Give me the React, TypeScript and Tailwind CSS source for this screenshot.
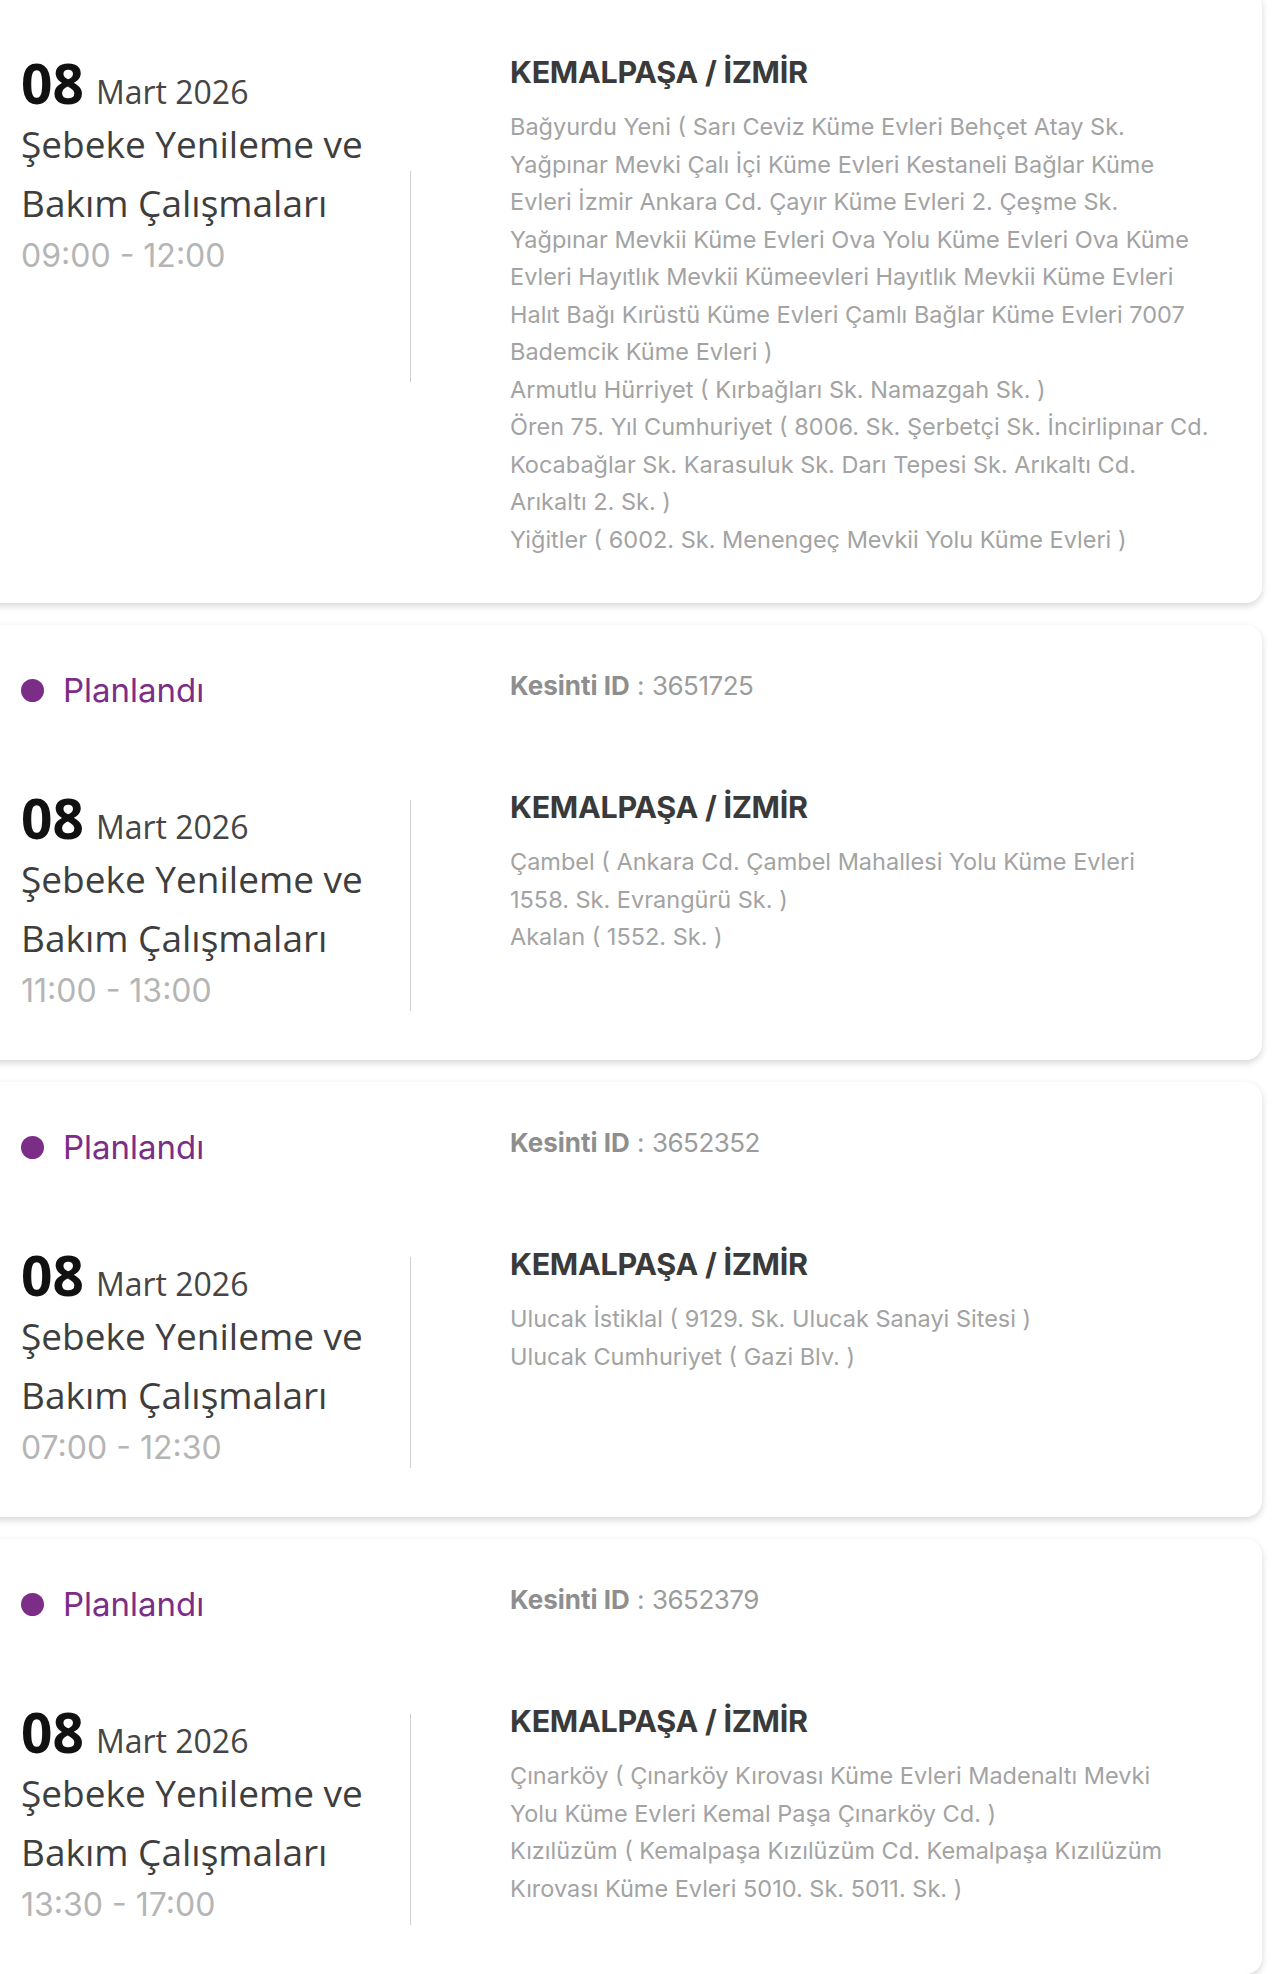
type Outage = {
  id?: string
  time: string
  lines: string[]
  dividerTop: string
}

const outages: Outage[] = [
  {
    time: '09:00 - 12:00',
    dividerTop: 'mt-[119px]',
    lines: [
      'Bağyurdu Yeni ( Sarı Ceviz Küme Evleri Behçet Atay Sk.',
      'Yağpınar Mevki Çalı İçi Küme Evleri Kestaneli Bağlar Küme',
      'Evleri İzmir Ankara Cd. Çayır Küme Evleri 2. Çeşme Sk.',
      'Yağpınar Mevkii Küme Evleri Ova Yolu Küme Evleri Ova Küme',
      'Evleri Hayıtlık Mevkii Kümeevleri Hayıtlık Mevkii Küme Evleri',
      'Halıt Bağı Kırüstü Küme Evleri Çamlı Bağlar Küme Evleri 7007',
      'Bademcik Küme Evleri )',
      'Armutlu Hürriyet ( Kırbağları Sk. Namazgah Sk. )',
      'Ören 75. Yıl Cumhuriyet ( 8006. Sk. Şerbetçi Sk. İncirlipınar Cd.',
      'Kocabağlar Sk. Karasuluk Sk. Darı Tepesi Sk. Arıkaltı Cd.',
      'Arıkaltı 2. Sk. )',
      'Yiğitler ( 6002. Sk. Menengeç Mevkii Yolu Küme Evleri )',
    ],
  },
  {
    id: '3651725',
    time: '11:00 - 13:00',
    dividerTop: 'mt-[13px]',
    lines: [
      'Çambel ( Ankara Cd. Çambel Mahallesi Yolu Küme Evleri',
      '1558. Sk. Evrangürü Sk. )',
      'Akalan ( 1552. Sk. )',
    ],
  },
  {
    id: '3652352',
    time: '07:00 - 12:30',
    dividerTop: 'mt-[13px]',
    lines: ['Ulucak İstiklal ( 9129. Sk. Ulucak Sanayi Sitesi )', 'Ulucak Cumhuriyet ( Gazi Blv. )'],
  },
  {
    id: '3652379',
    time: '13:30 - 17:00',
    dividerTop: 'mt-[13px]',
    lines: [
      'Çınarköy ( Çınarköy Kırovası Küme Evleri Madenaltı Mevki',
      'Yolu Küme Evleri Kemal Paşa Çınarköy Cd. )',
      'Kızılüzüm ( Kemalpaşa Kızılüzüm Cd. Kemalpaşa Kızılüzüm',
      'Kırovası Küme Evleri 5010. Sk. 5011. Sk. )',
    ],
  },
]

function OutageCard({ outage }: { outage: Outage }) {
  return (
    <div
      className={`-ml-[30px] rounded-[16px] bg-white pl-[51px] pb-[45px] shadow-[0_3px_7px_rgba(0,0,0,0.16)] ${
        outage.id ? 'pt-[45px]' : 'pt-[62px]'
      }`}
    >
      {outage.id && (
        <div className="mb-[77px] flex h-[40px] items-start">
          <div className="flex h-[40px] w-[489px] items-center">
            <span className="h-[23px] w-[23px] rounded-full bg-[#7b2d88]" />
            <span className="ml-[19px] font-['Inter',sans-serif] text-[33px] leading-[40px] text-[#7b2d88]">Planlandı</span>
          </div>
          <div className="font-['Inter',sans-serif] text-[26px] leading-[32px] text-[#9c9c9c]">
            <span className="font-bold text-[#8e8e8e]">Kesinti ID</span> :{' '}
            <span className="tracking-[-0.5px]">{outage.id}</span>
          </div>
        </div>
      )}

      <div className="flex items-start">
        {/* date + title */}
        <div className="w-[389px]">
          <div className="flex h-[62px] items-baseline pt-[3px]">
            <span className="font-['Open_Sans',sans-serif] text-[55px] font-bold leading-[56px] text-[#111]">08</span>
            <span className="ml-[12px] font-['Open_Sans',sans-serif] text-[32px] leading-[56px] text-[#454545]">Mart 2026</span>
          </div>
          <div className="font-['Open_Sans',sans-serif] text-[37px] leading-[59px] text-[#3e3e3e]">
            Şebeke Yenileme ve
            <br />
            Bakım Çalışmaları
          </div>
          <div className="font-['Inter',sans-serif] text-[32px] leading-[48px] text-[#b5b5b5]">{outage.time}</div>
        </div>

        <div className={`${outage.dividerTop} h-[211px] w-px bg-[#cfcfcf]`} />

        {/* location */}
        <div className="ml-[99px]">
          <div className="font-['Inter',sans-serif] text-[30.5px] font-bold leading-[40px] tracking-[-0.3px] text-[#3a3a3a]">
            KEMALPAŞA / İZMİR
          </div>
          <div className="mt-[16px] font-['Inter',sans-serif] text-[23.5px] leading-[37.5px] text-[#a3a3a3]">
            {outage.lines.map((line, i) => (
              <div key={i} className="whitespace-nowrap">
                {line}
              </div>
            ))}
          </div>
        </div>
      </div>
    </div>
  )
}

export default function App() {
  return (
    <div className="h-[1974px] overflow-hidden bg-white">
      <div className="-mt-[10px] flex flex-col gap-[22px] pr-[18px]">
        {outages.map((o, i) => (
          <OutageCard key={i} outage={o} />
        ))}
      </div>
    </div>
  )
}
